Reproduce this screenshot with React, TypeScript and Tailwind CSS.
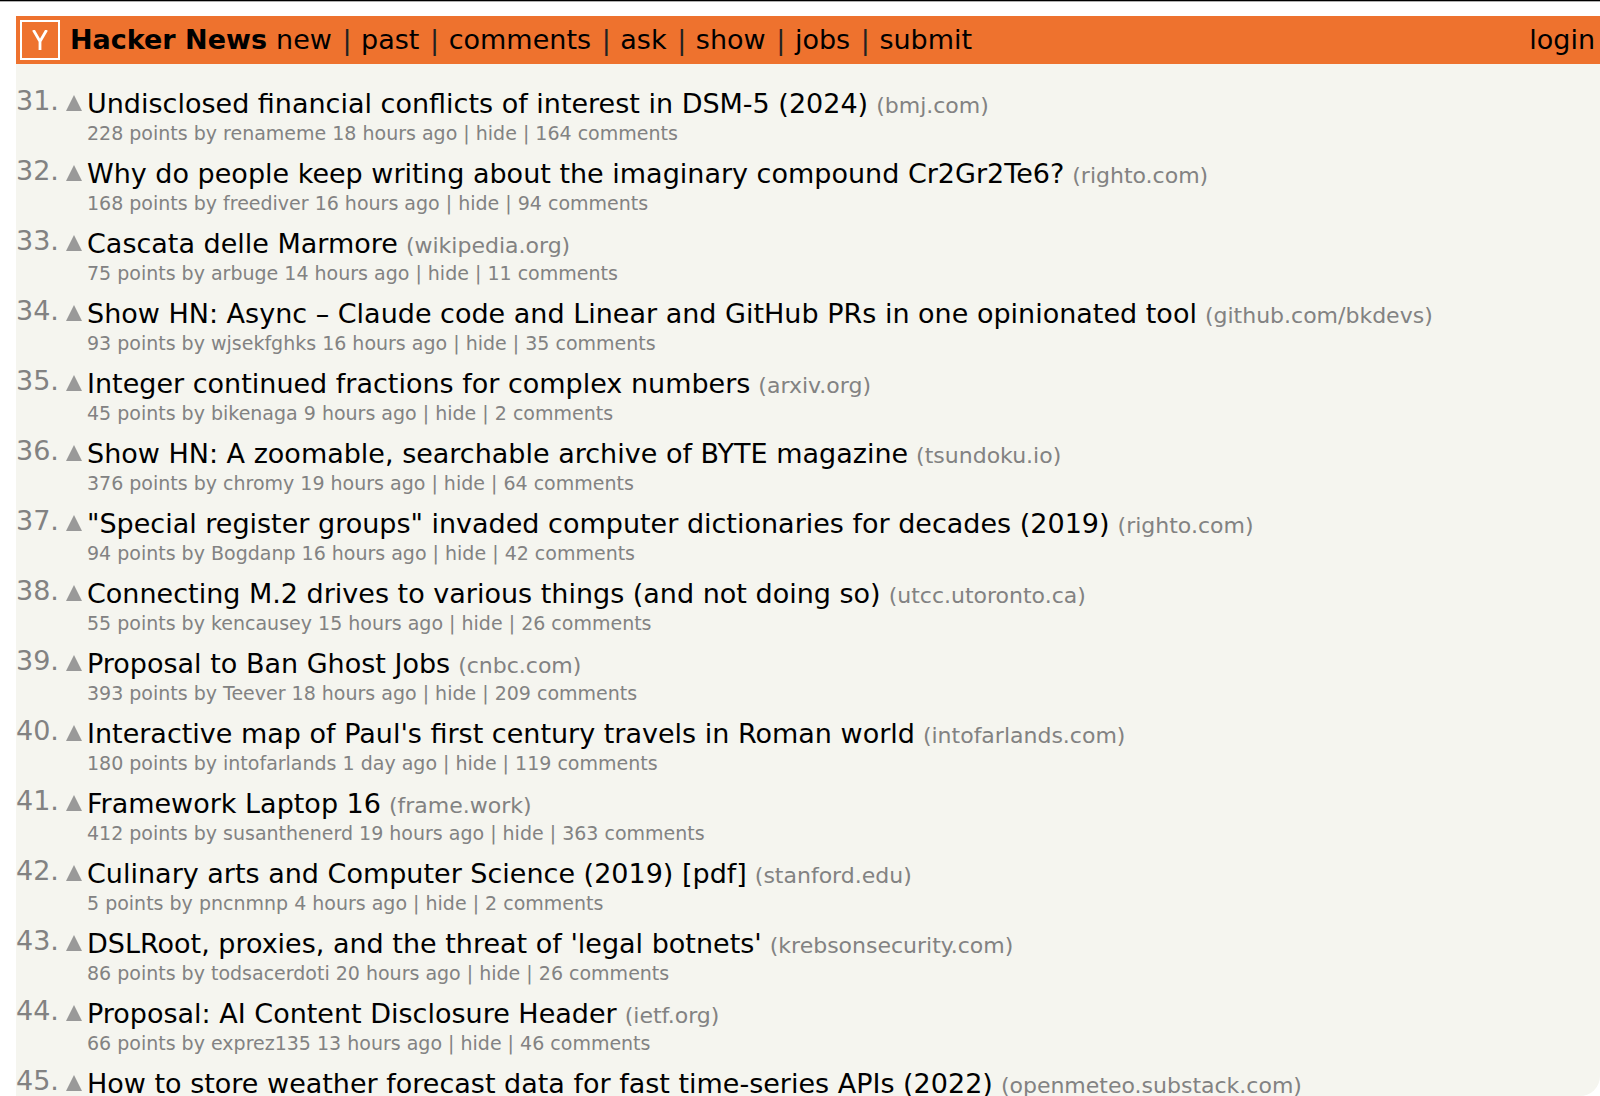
type Story = {
  rank: number;
  title: string;
  site: string;
  meta?: { points: number; user: string; age: string; comments: number };
};

const stories: Story[] = [
  { rank: 31, title: "Undisclosed financial conflicts of interest in DSM-5 (2024)", site: "bmj.com", meta: { points: 228, user: "renameme", age: "18 hours ago", comments: 164 } },
  { rank: 32, title: "Why do people keep writing about the imaginary compound Cr2Gr2Te6?", site: "righto.com", meta: { points: 168, user: "freediver", age: "16 hours ago", comments: 94 } },
  { rank: 33, title: "Cascata delle Marmore", site: "wikipedia.org", meta: { points: 75, user: "arbuge", age: "14 hours ago", comments: 11 } },
  { rank: 34, title: "Show HN: Async – Claude code and Linear and GitHub PRs in one opinionated tool", site: "github.com/bkdevs", meta: { points: 93, user: "wjsekfghks", age: "16 hours ago", comments: 35 } },
  { rank: 35, title: "Integer continued fractions for complex numbers", site: "arxiv.org", meta: { points: 45, user: "bikenaga", age: "9 hours ago", comments: 2 } },
  { rank: 36, title: "Show HN: A zoomable, searchable archive of BYTE magazine", site: "tsundoku.io", meta: { points: 376, user: "chromy", age: "19 hours ago", comments: 64 } },
  { rank: 37, title: "\"Special register groups\" invaded computer dictionaries for decades (2019)", site: "righto.com", meta: { points: 94, user: "Bogdanp", age: "16 hours ago", comments: 42 } },
  { rank: 38, title: "Connecting M.2 drives to various things (and not doing so)", site: "utcc.utoronto.ca", meta: { points: 55, user: "kencausey", age: "15 hours ago", comments: 26 } },
  { rank: 39, title: "Proposal to Ban Ghost Jobs", site: "cnbc.com", meta: { points: 393, user: "Teever", age: "18 hours ago", comments: 209 } },
  { rank: 40, title: "Interactive map of Paul's first century travels in Roman world", site: "intofarlands.com", meta: { points: 180, user: "intofarlands", age: "1 day ago", comments: 119 } },
  { rank: 41, title: "Framework Laptop 16", site: "frame.work", meta: { points: 412, user: "susanthenerd", age: "19 hours ago", comments: 363 } },
  { rank: 42, title: "Culinary arts and Computer Science (2019) [pdf]", site: "stanford.edu", meta: { points: 5, user: "pncnmnp", age: "4 hours ago", comments: 2 } },
  { rank: 43, title: "DSLRoot, proxies, and the threat of 'legal botnets'", site: "krebsonsecurity.com", meta: { points: 86, user: "todsacerdoti", age: "20 hours ago", comments: 26 } },
  { rank: 44, title: "Proposal: AI Content Disclosure Header", site: "ietf.org", meta: { points: 66, user: "exprez135", age: "13 hours ago", comments: 46 } },
  { rank: 45, title: "How to store weather forecast data for fast time-series APIs (2022)", site: "openmeteo.substack.com" },
];

const navLinks = ["new", "past", "comments", "ask", "show", "jobs", "submit"];

function Header() {
  return (
    <header className="flex h-12 shrink-0 items-center bg-[#ee722e] pr-[5px] pl-1 text-[27px] leading-8 whitespace-nowrap text-black">
      <a
        href="#home"
        aria-label="Home"
        className="mr-[10px] flex size-10 shrink-0 items-center justify-center border-2 border-white"
      >
        <svg viewBox="0 0 16 20" className="h-5 w-4" fill="none" stroke="white" strokeWidth="2.8" aria-hidden="true">
          <path d="M1.4 0 L8 11.5 L14.6 0 M8 11 V20" />
        </svg>
      </a>
      <a href="#news" className="mr-[9px] font-bold">Hacker News</a>
      <nav className="flex">
        {navLinks.map((link, i) => (
          <span key={link} className="whitespace-pre">
            {i > 0 && <span className="pr-px pl-0.5 text-[#222222]"> | </span>}
            <a href={"#" + link}>{link}</a>
          </span>
        ))}
      </nav>
      <a href="#login" className="ml-auto">login</a>
    </header>
  );
}

function StoryRow({ story }: { story: Story }) {
  const { rank, title, site, meta } = story;
  return (
    <li className="flex items-start pb-3 last:pb-0">
      <span className="-mt-[3px] w-[42px] shrink-0 text-right text-[27px] leading-8 text-[#828282]">{rank}.</span>
      <button type="button" aria-label={"Upvote " + title} className="mt-[7px] ml-2 shrink-0">
        <svg viewBox="0 0 16 16" className="block size-4" aria-hidden="true">
          <path d="M8 0 L16 16 H0 Z" fill="#999999" />
        </svg>
      </button>
      <div className="ml-[5px] whitespace-nowrap">
        <div className="text-[27px] leading-8 text-black">
          <a href={"#item-" + rank}>{title}</a>
          <span className="ml-2 text-[22px] leading-none text-[#828282]">
            (<a href={"#site-" + site}>{site}</a>)
          </span>
        </div>
        {meta && (
          <div className="text-[19px] leading-[26px] text-[#828282]">
            {meta.points} points by <a href={"#user-" + meta.user}>{meta.user}</a>{" "}
            <a href={"#item-" + rank}>{meta.age}</a> | <a href="#hide">hide</a> |{" "}
            <a href={"#comments-" + rank}>{meta.comments} comments</a>
          </div>
        )}
      </div>
    </li>
  );
}

export default function App() {
  return (
    <div className="flex h-screen flex-col overflow-hidden border-t border-black bg-white font-['DejaVu_Sans',Verdana,sans-serif]">
      <div className="flex min-h-0 grow flex-col border-t border-[#b0b0b0] pt-[14px] pl-4">
        <Header />
        <main className="min-h-0 grow overflow-hidden rounded-br-[20px] bg-[#f5f5ef] pt-6">
          <ol>
            {stories.map((story) => (
              <StoryRow key={story.rank} story={story} />
            ))}
          </ol>
        </main>
      </div>
    </div>
  );
}
